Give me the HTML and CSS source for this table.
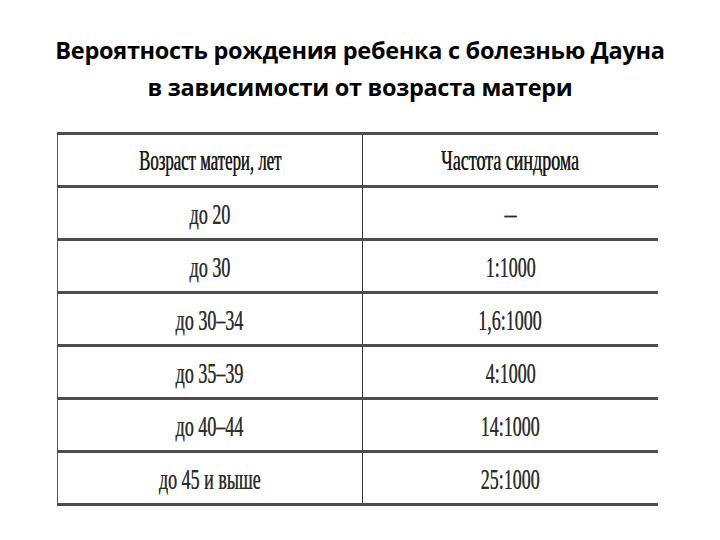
FILE: index.html
```html
<!DOCTYPE html>
<html lang="ru">
<head>
<meta charset="utf-8">
<link rel="stylesheet" href="styles.css">
</head>
<body>
<h1 class="title">Вероятность рождения ребенка с болезнью Дауна<br>в зависимости от возраста матери</h1>
<table class="tbl">
  <tr class="head"><td class="c1"><span class="t t-narrow">Возраст матери, лет</span></td><td class="c2"><span class="t">Частота синдрома</span></td></tr>
  <tr><td class="c1"><span class="t">до 20</span></td><td class="c2"><span class="t t-dash">–</span></td></tr>
  <tr><td class="c1"><span class="t">до 30</span></td><td class="c2"><span class="t">1:1000</span></td></tr>
  <tr><td class="c1"><span class="t">до 30–34</span></td><td class="c2"><span class="t">1,6:1000</span></td></tr>
  <tr><td class="c1"><span class="t">до 35–39</span></td><td class="c2"><span class="t">4:1000</span></td></tr>
  <tr><td class="c1"><span class="t">до 40–44</span></td><td class="c2"><span class="t">14:1000</span></td></tr>
  <tr><td class="c1"><span class="t">до 45 и выше</span></td><td class="c2"><span class="t">25:1000</span></td></tr>
</table>
</body>
</html>
```
FILE: styles.css
```css
html, body { margin: 0; padding: 0; background: #fff; }
body { width: 720px; height: 540px; overflow: hidden; }
.title {
  margin: 32px 0 0 0;
  font-family: "Open Sans", "Noto Sans", sans-serif;
  font-weight: 700;
  font-size: 23.5px;
  line-height: 37px;
  text-align: center;
  color: #000;
  letter-spacing: -0.3px;
}
.tbl {
  margin: 26px 0 0 57px;
  width: 601px;
  border-collapse: collapse;
  border-left: 1px solid #555;
}
.tbl td {
  height: 48px;
  padding: 2px 0 0 0;
  border-top: 3px solid #4d4d4d;
  border-bottom: 3px solid #4d4d4d;
  text-align: center;
  vertical-align: middle;
  font-family: "Liberation Serif", "DejaVu Serif", serif;
  font-size: 30px;
  line-height: 34px;
  color: #2e2e2e;
  text-shadow: 0.3px 0 0 #555;
}
.tbl .head td { height: 50px; color: #1a1a1a; text-shadow: 0.6px 0 0 #333; padding-top: 0; }
.tbl .c1 { width: 304px; border-right: 1px solid #333; }
.tbl .c2 { width: 296px; }
.t { display: inline-block; transform: scaleX(0.6); white-space: nowrap; }
.t-narrow { transform: scaleX(0.56); }
.t-dash { transform: scaleX(0.8); }
```
